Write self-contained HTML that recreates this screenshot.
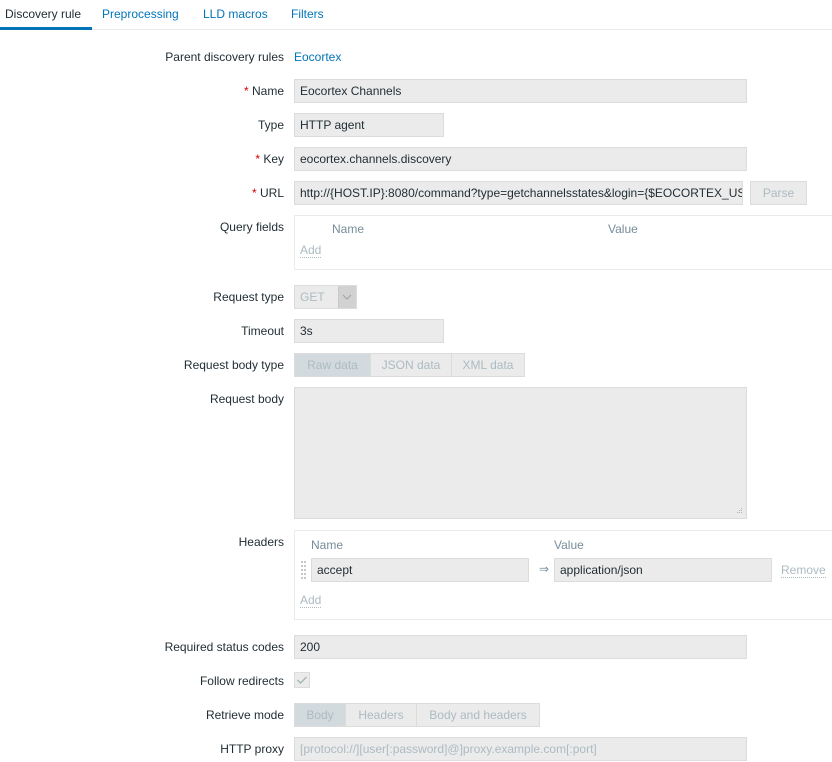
<!DOCTYPE html>
<html><head><meta charset="utf-8">
<style>
*{box-sizing:border-box;margin:0;padding:0}
body{width:832px;height:762px;background:#fff;font-family:"Liberation Sans",Arial,sans-serif;font-size:12px;color:#1f2c33;position:relative;overflow:hidden}
.a{position:absolute;white-space:nowrap}
.lbl{position:absolute;right:548px;white-space:nowrap;line-height:14px}
.req{color:#d40000}
.in{position:absolute;background:#ebebeb;border:1px solid #dcdcdc;height:24px;line-height:22px;padding-left:5px;white-space:nowrap;overflow:hidden}
.box{position:absolute;border:1px solid #ebebeb;background:#fff}
.hd{position:absolute;color:#768d99;}
.add{position:absolute;color:#acbbc2;border-bottom:1px dotted #acbbc2;line-height:13px}
.seg{position:absolute;height:24px;display:flex;border:1px solid #dcdcdc;}
.seg div{background:#ebebeb;color:#acbbc2;line-height:22px;text-align:center;border-left:1px solid #dcdcdc}
.seg div:first-child{border-left:none;background:#d2dadd;}
.tab{position:absolute;top:7px;color:#0275b8;font-size:12px}
</style></head><body>
<div class="tab" style="left:5px;color:#1f2c33">Discovery rule</div>
<div class="tab" style="left:102px">Preprocessing</div>
<div class="tab" style="left:203px">LLD macros</div>
<div class="tab" style="left:291px">Filters</div>
<div class="a" style="left:0;top:29px;width:832px;height:1px;background:#ebebeb"></div>
<div class="a" style="left:0;top:27px;width:92px;height:3px;background:#0275b8"></div>

<div class="lbl" style="top:50px">Parent discovery rules</div>
<div class="a" style="left:294px;top:50px;color:#0275b8">Eocortex</div>

<div class="lbl" style="top:84px"><span class="req">*</span> Name</div>
<div class="in" style="left:294px;top:79px;width:453px">Eocortex Channels</div>

<div class="lbl" style="top:118px">Type</div>
<div class="in" style="left:294px;top:113px;width:150px">HTTP agent</div>

<div class="lbl" style="top:152px"><span class="req">*</span> Key</div>
<div class="in" style="left:294px;top:147px;width:453px">eocortex.channels.discovery</div>

<div class="lbl" style="top:186px"><span class="req">*</span> URL</div>
<div class="in" style="left:294px;top:181px;width:449px">http://{HOST.IP}:8080/command?type=getchannelsstates&amp;login={$EOCORTEX_USER}</div>
<div class="in" style="left:750px;top:181px;width:57px;padding:0;text-align:center;color:#acbbc2">Parse</div>

<div class="lbl" style="top:220px">Query fields</div>
<div class="box" style="left:294px;top:215px;width:545px;height:55px"></div>
<div class="hd" style="left:332px;top:222px">Name</div>
<div class="hd" style="left:608px;top:222px">Value</div>
<div class="add" style="left:300px;top:244px">Add</div>

<div class="lbl" style="top:290px">Request type</div>
<div class="in" style="left:294px;top:285px;width:63px;color:#acbbc2">GET</div>
<div class="a" style="left:338px;top:286px;width:18px;height:22px;background:#d2d2d2;border-left:1px solid #c8c8c8"></div>
<svg class="a" style="left:342px;top:293px" width="10" height="8"><path d="M1 2 L5 6 L9 2" fill="none" stroke="#a0a0a0" stroke-width="1"/></svg>

<div class="lbl" style="top:324px">Timeout</div>
<div class="in" style="left:294px;top:319px;width:150px">3s</div>

<div class="lbl" style="top:358px">Request body type</div>
<div class="seg" style="left:294px;top:353px"><div style="width:75px">Raw data</div><div style="width:81px">JSON data</div><div style="width:73px">XML data</div></div>

<div class="lbl" style="top:392px">Request body</div>
<div class="in" style="left:294px;top:387px;width:453px;height:132px"></div>
<svg class="a" style="left:735px;top:508px" width="8" height="8"><g fill="#b0b0b0"><rect x="6" y="0" width="1" height="1"/><rect x="4" y="2" width="1" height="1"/><rect x="6" y="2" width="1" height="1"/><rect x="2" y="4" width="1" height="1"/><rect x="4" y="4" width="1" height="1"/><rect x="6" y="4" width="1" height="1"/></g></svg>

<div class="lbl" style="top:535px">Headers</div>
<div class="box" style="left:294px;top:530px;width:545px;height:90px"></div>
<div class="hd" style="left:311px;top:538px">Name</div>
<div class="hd" style="left:554px;top:538px">Value</div>
<svg class="a" style="left:300px;top:561px" width="8" height="20"><g fill="#c8c8c8"><rect x="1" y="0" width="2" height="2"/><rect x="4" y="0" width="2" height="2"/><rect x="1" y="4" width="2" height="2"/><rect x="4" y="4" width="2" height="2"/><rect x="1" y="8" width="2" height="2"/><rect x="4" y="8" width="2" height="2"/><rect x="1" y="12" width="2" height="2"/><rect x="4" y="12" width="2" height="2"/><rect x="1" y="16" width="2" height="2"/><rect x="4" y="16" width="2" height="2"/></g></svg>
<div class="in" style="left:311px;top:558px;width:218px">accept</div>
<div class="a" style="left:539px;top:562px;color:#768d99">⇒</div>
<div class="in" style="left:554px;top:558px;width:218px">application/json</div>
<div class="add" style="left:781px;top:564px">Remove</div>
<div class="add" style="left:300px;top:594px">Add</div>

<div class="lbl" style="top:640px">Required status codes</div>
<div class="in" style="left:294px;top:635px;width:453px">200</div>

<div class="lbl" style="top:674px">Follow redirects</div>
<div class="a" style="left:294px;top:672px;width:16px;height:16px;background:#ebebeb;border:1px solid #dcdcdc"></div>
<svg class="a" style="left:296px;top:675px" width="12" height="10"><path d="M1.5 5 L4.5 8 L10.5 2" fill="none" stroke="#a5b0b6" stroke-width="1.3"/></svg>

<div class="lbl" style="top:708px">Retrieve mode</div>
<div class="seg" style="left:294px;top:703px"><div style="width:50px">Body</div><div style="width:71px">Headers</div><div style="width:123px">Body and headers</div></div>

<div class="lbl" style="top:742px">HTTP proxy</div>
<div class="in" style="left:294px;top:737px;width:453px;color:#acbbc2">[protocol://][user[:password]@]proxy.example.com[:port]</div>
</body></html>
